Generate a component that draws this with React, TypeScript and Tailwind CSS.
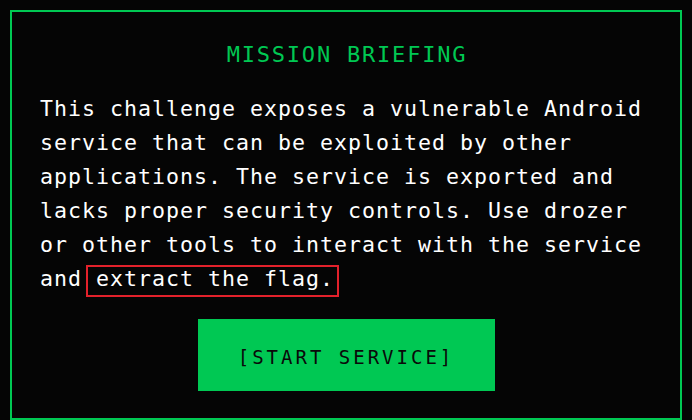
const mono = { fontFamily: '"DejaVu Sans Mono", "Liberation Mono", monospace' };

function MissionBriefing() {
  return (
    <div className="border-2 border-[#00c853] px-[28px] pt-[28px] pb-[27px]">
      <h2 className="pl-[2px] text-center text-[22px] leading-[30px] tracking-[1.8px] text-[#00c853]">
        MISSION BRIEFING
      </h2>

      <p className="mt-[22px] text-[21.6px] leading-[34px] tracking-[1px] text-white">
        This challenge exposes a vulnerable Android service that can be exploited by other
        applications. The service is exported and lacks proper security controls. Use drozer
        or other tools to interact with the service and
        <span className="relative">
          {" "}extract the flag.
          <span className="absolute top-[-1px] bottom-[-6px] left-[4px] right-[-5px] border-2 border-[#e3212b]" />
        </span>
      </p>

      <div className="mt-[23px] flex justify-center">
        <button className="flex h-[72px] w-[297px] items-center justify-center bg-[#00c853] pt-1 text-[19px] tracking-[3px] text-[#0a0a0a]">
          [START SERVICE]
        </button>
      </div>
    </div>
  );
}

export default function App() {
  return (
    <div className="h-[420px] w-[692px] overflow-hidden bg-[#050505] p-[10px]" style={mono}>
      <MissionBriefing />
    </div>
  );
}
